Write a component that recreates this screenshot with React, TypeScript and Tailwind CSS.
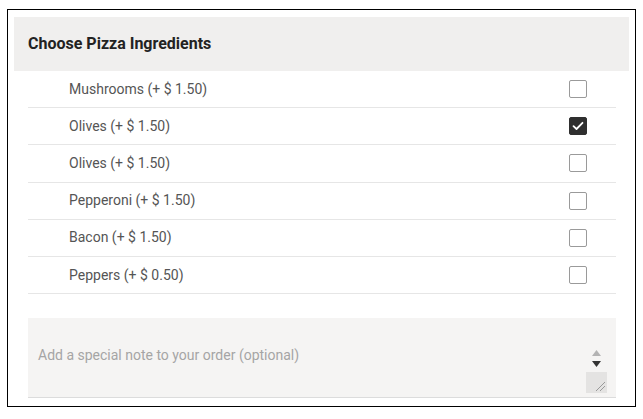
import {useState} from 'react';

const ingredients = [
  {name: 'Mushrooms', price: '1.50', checked: false},
  {name: 'Olives', price: '1.50', checked: true},
  {name: 'Olives', price: '1.50', checked: false},
  {name: 'Pepperoni', price: '1.50', checked: false},
  {name: 'Bacon', price: '1.50', checked: false},
  {name: 'Peppers', price: '0.50', checked: false},
];

const Checkbox = ({checked, onClick}: {checked: boolean; onClick: () => void}) => (
  <button
    onClick={onClick}
    className={
      checked
        ? 'w-[18px] h-[18px] rounded-[2px] bg-[#2f2f2f] border border-[#2f2f2f] flex items-center justify-center'
        : 'w-[18px] h-[18px] rounded-[2px] bg-white border-[1.5px] border-[#9a9a9a] flex items-center justify-center'
    }
  >
    {checked && (
      <svg width="12" height="10" viewBox="0 0 12 10" fill="none">
        <path d="M1.5 5.2 L4.5 8 L10.5 1.8" stroke="white" strokeWidth="1.8" strokeLinecap="round" strokeLinejoin="round" />
      </svg>
    )}
  </button>
);

export default function App() {
  const [items, setItems] = useState(ingredients);

  const toggle = (i: number) => {
    setItems(items.map((item, idx) => (idx === i ? {...item, checked: !item.checked} : item)));
  };

  return (
    <div className="w-[643px] h-[419px] bg-white pt-[9px] pl-[7px]" style={{fontFamily: 'Roboto, "Noto Sans", sans-serif'}}>
      <div className="w-[629px] h-[398px] border border-black pt-[7px] px-[6px]">
        <div className="h-[54px] bg-[#f0efee] flex items-center pl-[14px]">
          <h2 className="text-[16px] font-bold text-[#222]">Choose Pizza Ingredients</h2>
        </div>
        <div className="pl-[14px] pr-[13px]">
          {items.map((item, i) => (
            <div key={i} className="h-[37.2px] flex items-center border-b border-[#e6e6e6] pl-[41px] pr-[29px]">
              <span className="flex-1 text-[14px] text-[#555]">
                {item.name} (+ $ {item.price})
              </span>
              <Checkbox checked={item.checked} onClick={() => toggle(i)} />
            </div>
          ))}
          <div className="mt-[24px] h-[80px] bg-[#f5f4f3] border-b border-[#dcdcdc] flex">
            <div className="flex-1 pl-[10px] pt-[27px] text-[14px] text-[#a5a5a5]">
              Add a special note to your order (optional)
            </div>
            <div className="w-[21px] mr-[9px] pb-[4px] flex flex-col justify-end items-stretch">
              <div className="flex flex-col items-center gap-[5px] pb-[5px]">
                <svg width="9" height="6" viewBox="0 0 9 6">
                  <path d="M0 6 L4.5 0 L9 6 Z" fill="#b3b3b3" />
                </svg>
                <svg width="9" height="6" viewBox="0 0 9 6">
                  <path d="M0 0 L4.5 6 L9 0 Z" fill="#333" />
                </svg>
              </div>
              <div className="h-[21px] bg-[#e4e3e2] flex items-end justify-end p-[2px]">
                <svg width="10" height="10" viewBox="0 0 10 10">
                  <path d="M1 10 L10 1 M5 10 L10 5" stroke="#999" strokeWidth="1" />
                </svg>
              </div>
            </div>
          </div>
        </div>
      </div>
    </div>
  );
}
